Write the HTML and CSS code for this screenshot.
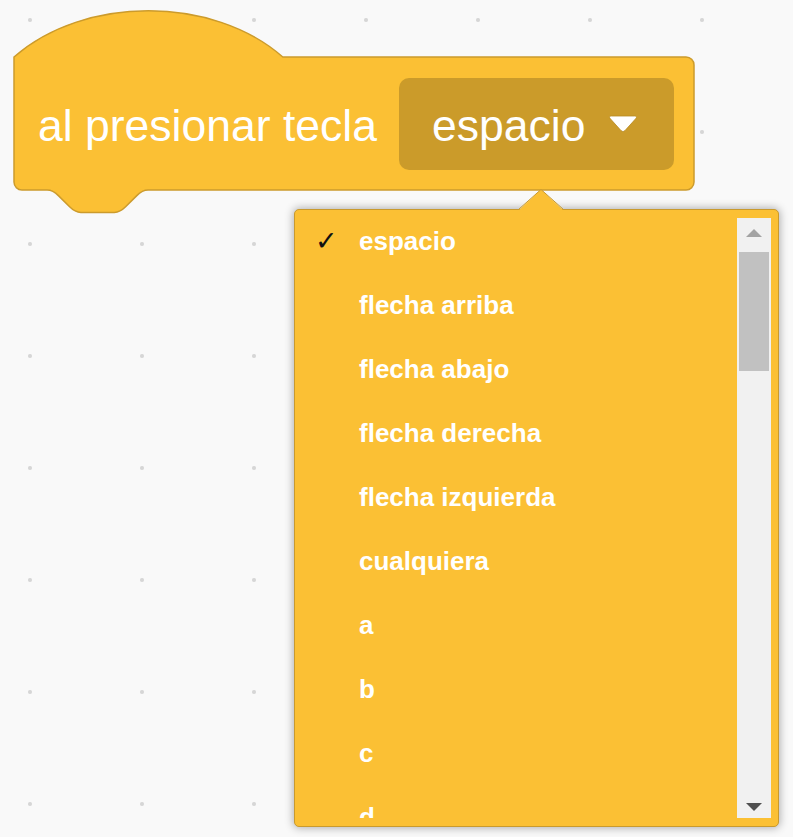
FILE: index.html
```html
<!DOCTYPE html>
<html lang="es">
<head>
<meta charset="utf-8">
<title>al presionar tecla</title>
<link rel="stylesheet" href="styles.css">
</head>
<body>
<div class="workspace">
  <div class="block">
    <svg class="block-shape" width="684" height="216" viewBox="13 0 684 216" aria-hidden="true">
      <path d="M 14,57 c 70,-61.6 198.8,-61.6 268.8,0 L 686,57 a 8,8 0 0 1 8,8 L 694,182 a 8,8 0 0 1 -8,8 L 148,190 c -5.6,0 -8.4,2.8 -11.2,5.6 l -11.2,11.2 c -2.8,2.8 -5.6,5.6 -11.2,5.6 h -33.6 c -5.6,0 -8.4,-2.8 -11.2,-5.6 l -11.2,-11.2 c -2.8,-2.8 -5.6,-5.6 -11.2,-5.6 L 22,190 a 8,8 0 0 1 -8,-8 Z" />
    </svg>
    <span class="block-label">al presionar tecla</span>
    <div class="field">
      <span class="field-text">espacio</span>
      <svg class="field-arrow" width="30" height="20" viewBox="0 0 30 20" aria-hidden="true">
        <path d="M 3.5,2 H 26.5 Q 30,2 27.6,4.8 L 17,16.6 Q 15,18.8 13,16.6 L 2.4,4.8 Q 0,2 3.5,2 Z" />
      </svg>
    </div>
  </div>

  <div class="menu">
    <svg class="menu-arrow" width="48" height="24" viewBox="0 0 48 24" aria-hidden="true">
      <polygon class="menu-arrow-fill" points="1,23 24,1.5 47,23" />
      <polyline class="menu-arrow-line" points="1.5,21.5 24,1.5 46.5,21.5" />
    </svg>
    <ul class="menu-list">
      <li class="menu-item selected"><span class="check">✓</span>espacio</li>
      <li class="menu-item">flecha arriba</li>
      <li class="menu-item">flecha abajo</li>
      <li class="menu-item">flecha derecha</li>
      <li class="menu-item">flecha izquierda</li>
      <li class="menu-item">cualquiera</li>
      <li class="menu-item">a</li>
      <li class="menu-item">b</li>
      <li class="menu-item">c</li>
      <li class="menu-item">d</li>
    </ul>
    <div class="scrollbar">
      <div class="scroll-btn"><span class="tri-up"></span></div>
      <div class="scroll-track"><div class="scroll-thumb"></div></div>
      <div class="scroll-btn"><span class="tri-down"></span></div>
    </div>
  </div>
</div>
</body>
</html>
```

FILE: styles.css
```css
* { box-sizing: border-box; }

html, body {
  margin: 0;
  padding: 0;
}

body {
  width: 793px;
  height: 837px;
  overflow: hidden;
  font-family: "Liberation Sans", Arial, sans-serif;
  background-color: #f9f9f9;
}

.workspace {
  position: relative;
  width: 793px;
  height: 837px;
  padding: 57px 0 0 14px;
  background-color: #f9f9f9;
  background-image: radial-gradient(circle, #d6d6d6 0, #d6d6d6 1.5px, rgba(214,214,214,0) 2.5px);
  background-size: 112px 112px;
  background-position: -26px -36px;
}

/* ---------- hat block ---------- */
.block {
  position: relative;
  width: 680px;
  height: 133px;
  display: flex;
  align-items: center;
  padding: 0 20px 0 24px;
  gap: 22px;
}

.block-shape {
  position: absolute;
  left: -1px;
  top: -57px;
  overflow: visible;
}

.block-shape path {
  fill: #fbc034;
  stroke: #cc9b2c;
  stroke-width: 1.5;
}

.block-label {
  position: relative;
  flex: none;
  width: 339px;
  color: #ffffff;
  font-size: 44.5px;
  white-space: nowrap;
  padding-top: 5px;
}

.field {
  position: relative;
  flex: none;
  width: 275px;
  height: 92px;
  display: flex;
  align-items: center;
  padding: 5px 0 0 33px;
  gap: 24px;
  border-radius: 10px;
  background: #cb9b2a;
}

.field-text {
  flex: none;
  width: 152px;
  color: #ffffff;
  font-size: 44.5px;
  white-space: nowrap;
}

.field-arrow {
  margin-top: -5px;
}

.field-arrow path {
  fill: #ffffff;
  stroke: #b88a22;
  stroke-width: 0.8;
}

/* ---------- dropdown menu ---------- */
.menu {
  position: absolute;
  left: 294px;
  top: 209px;
  width: 485px;
  height: 618px;
  display: flex;
  padding: 8px 7px 8px 0;
  background: #fbc034;
  border: 1px solid #c99a2e;
  border-radius: 5px;
  box-shadow: 0 0 8px 1px rgba(0, 0, 0, 0.3);
}

.menu-arrow {
  position: absolute;
  left: 222px;
  top: -22px;
  overflow: visible;
}

.menu-arrow-fill {
  fill: #fbc034;
}

.menu-arrow-line {
  fill: none;
  stroke: #c99a2e;
  stroke-width: 1;
}

.menu-list {
  list-style: none;
  margin: 0;
  padding: 0;
  flex: 1;
  height: 600px;
  overflow: hidden;
}

.menu-item {
  position: relative;
  height: 64px;
  line-height: 46px;
  padding-left: 64px;
  color: #ffffff;
  font-size: 26px;
  font-weight: bold;
  white-space: nowrap;
}

.check {
  position: absolute;
  left: 20px;
  top: 0;
  color: #111111;
  font-family: "DejaVu Sans", sans-serif;
  font-weight: bold;
  font-size: 27px;
  line-height: 46px;
}

/* ---------- fake scrollbar ---------- */
.scrollbar {
  width: 34px;
  height: 600px;
  display: flex;
  flex-direction: column;
  background: #f1f1f1;
}

.scroll-btn {
  height: 34px;
  display: flex;
  align-items: center;
  justify-content: center;
}

.scroll-track {
  flex: 1;
  padding: 0 2px;
}

.scroll-thumb {
  height: 119px;
  background: #c1c1c1;
}

.tri-up {
  width: 0;
  height: 0;
  border-left: 8px solid transparent;
  border-right: 8px solid transparent;
  border-bottom: 8px solid #a3a3a3;
  margin-top: -4px;
}

.tri-down {
  width: 0;
  height: 0;
  border-left: 8px solid transparent;
  border-right: 8px solid transparent;
  border-top: 8px solid #505050;
  margin-top: 12px;
}
```
